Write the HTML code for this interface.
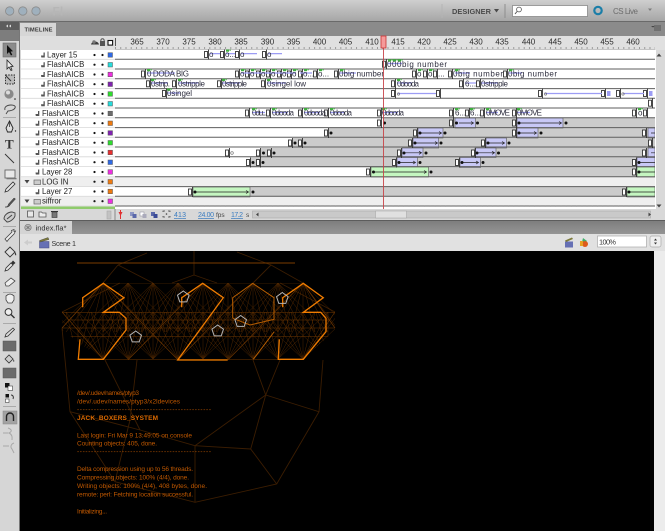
<!DOCTYPE html>
<html><head><meta charset="utf-8"><style>
html,body{margin:0;padding:0;background:#000;width:665px;height:531px;overflow:hidden}
svg{display:block;font-family:"Liberation Sans",sans-serif;filter:blur(.35px)}
.n{font-size:8px;fill:#2a2a2a;text-anchor:middle}
.l{font-size:7.8px;fill:#222}
.f{font-size:8px;fill:#2e2e3e}
.t{font-size:6.5px;fill:#c05800}
.d{fill:#111}
</style></head><body>
<svg width="665" height="531" viewBox="0 0 665 531" xmlns="http://www.w3.org/2000/svg">
<defs>
<linearGradient id="tb" x1="0" y1="0" x2="0" y2="1"><stop offset="0" stop-color="#cfcfcf"/><stop offset="1" stop-color="#a4a4a4"/></linearGradient>
<linearGradient id="bar" x1="0" y1="0" x2="0" y2="1"><stop offset="0" stop-color="#7c7c7c"/><stop offset="1" stop-color="#959595"/></linearGradient>
<clipPath id="mc"><path d="M62 312L103 283H303L335 312V330L303 360H103L62 330Z"/></clipPath>
<g id="k"><rect x="-1.500" y="-3" width="3" height="6" fill="#fff" stroke="#333" stroke-width=".9"/><line x1="2.500" y1="-5" x2="2.500" y2="5" stroke="#333" stroke-width=".9"/></g>
<g id="g"><rect x="0" y="-5" width="3" height="2.200" fill="#3fae3f"/><rect x="3.500" y="-5" width="1.200" height="1.400" fill="#3fae3f"/></g>
<path id="fan" d="M0 0L-50 49M0 0L-37 49M0 0L-25 49M0 0L-12 49M0 0L0 49M0 0L12 49M0 0L25 49M0 0L37 49M0 0L50 49"/>
<path id="fanu" d="M0 0L-50 -47M0 0L-37 -47M0 0L-25 -47M0 0L-12 -47M0 0L0 -47M0 0L12 -47M0 0L25 -47M0 0L37 -47M0 0L50 -47"/>
<path id="pent" d="M0 -6L5.800 -1.800L3.500 4.900L-3.500 4.900L-5.800 -1.800Z" fill="none" stroke="#b4b4b4" stroke-width="1"/>
</defs>

<!-- base -->
<rect width="665" height="531" fill="#d6d6d6"/>
<rect width="665" height="22" fill="url(#tb)"/>
<line x1="0" y1="21.500" x2="665" y2="21.500" stroke="#6a6a6a"/>
<g fill="#9fb0bd" stroke="#8a8a8a" stroke-width=".8"><circle cx="9.700" cy="11" r="4.200"/><circle cx="22.800" cy="11" r="4.200"/><circle cx="36" cy="11" r="4.200"/></g>
<text x="52.500" y="15.500" font-size="12" font-weight="bold" fill="#b6b6b6">Fl</text>
<line x1="442" y1="4" x2="442" y2="18" stroke="#b4b4b4"/>
<text x="452" y="14" font-size="7.400" font-weight="bold" fill="#4a4a4a" textLength="39">DESIGNER</text>
<path d="M494 9L499 9L496.500 12.500Z" fill="#4a4a4a"/>
<line x1="505" y1="4" x2="505" y2="18" stroke="#8e8e8e"/>
<rect x="512.500" y="5.500" width="75" height="11" fill="#fff" stroke="#8a8a8a" stroke-width=".8"/>
<circle cx="519" cy="9.500" r="2.400" fill="none" stroke="#555" stroke-width=".8"/><line x1="517" y1="11.500" x2="515" y2="14" stroke="#555"/>
<circle cx="598" cy="10.500" r="3.700" fill="none" stroke="#1b7ea8" stroke-width="2.200"/>
<text x="613" y="14" font-size="8" fill="#6c6c6c" textLength="25">CS Live</text>
<path d="M648 8.500L652 8.500L650 11Z" fill="#7d7d7d"/>

<rect y="22" width="665" height="14" fill="#8b8b8b"/>
<rect y="22" width="19" height="8" fill="#5d5d5d"/>
<rect y="30" width="19" height="11" fill="#7d7d7d"/>
<path d="M6 26L8 24.500V27.500ZM9 26L11 24.500V27.500Z" fill="#ddd"/>
<rect x="20" y="23" width="36" height="13" fill="#d6d6d6"/>
<text x="24.500" y="31.500" font-size="5.800" font-weight="bold" fill="#3a3a3a" textLength="28">TIMELINE</text>
<path d="M654 26h7M654 28h7M654 30h7" stroke="#444" stroke-width=".7"/><path d="M653 27.500L651 26H655Z" fill="#444"/>

<!-- timeline header -->
<rect x="20" y="36" width="645" height="14" fill="#dedede"/>
<rect x="115" y="36" width="550" height="14" fill="#e0e0e0"/>
<line x1="115" y1="48" x2="655" y2="48" stroke="#9a9a9a" stroke-width="2" stroke-dasharray="1 4.240"/>
<line x1="115" y1="49.500" x2="655" y2="49.500" stroke="#c4c4c4"/>
<path d="M91 44.500c1-4 7-4 8 0h-8z" fill="#3b3b3b"/><circle cx="94" cy="42" r="1.700" fill="#777"/>
<rect x="100" y="41" width="5" height="5" fill="#555"/><path d="M100.800 41c0-3 3.400-3 3.400 0" fill="none" stroke="#555"/>
<rect x="108" y="40.500" width="4.600" height="4.600" fill="#fff" stroke="#111" stroke-width="1.100"/>
<line x1="115.500" y1="38" x2="115.500" y2="46" stroke="#555"/>
<g>
<text class="n" x="137" y="44.500">365</text><text class="n" x="163" y="44.500">370</text><text class="n" x="189" y="44.500">375</text><text class="n" x="215" y="44.500">380</text><text class="n" x="241" y="44.500">385</text><text class="n" x="267.500" y="44.500">390</text><text class="n" x="293.500" y="44.500">395</text><text class="n" x="319.500" y="44.500">400</text><text class="n" x="345.500" y="44.500">405</text><text class="n" x="372" y="44.500">410</text><text class="n" x="398" y="44.500">415</text><text class="n" x="424" y="44.500">420</text><text class="n" x="450" y="44.500">425</text><text class="n" x="476" y="44.500">430</text><text class="n" x="502" y="44.500">435</text><text class="n" x="528.500" y="44.500">440</text><text class="n" x="555" y="44.500">445</text><text class="n" x="581" y="44.500">450</text><text class="n" x="607" y="44.500">455</text><text class="n" x="633" y="44.500">460</text>
</g>

<!-- layer column -->
<rect x="21" y="50" width="94" height="159" fill="#fff"/>
<rect x="21" y="177.300" width="94" height="9.700" fill="#efefef"/>
<rect x="21" y="196.800" width="94" height="9.700" fill="#efefef"/>
<rect x="21" y="206.500" width="94" height="3" fill="#8fcb6c"/>
<path d="M21 59.300H115M21 69H115M21 78.800H115M21 88.600H115M21 98.300H115M21 108H115M21 117.800H115M21 127.600H115M21 137.300H115M21 147H115M21 156.800H115M21 166.600H115M21 176.800H115M21 186.600H115M21 196.300H115M21 206H115" stroke="#d8d8d8" stroke-width=".8"/>

<!-- frames -->
<rect x="115" y="50" width="540" height="159" fill="#fff"/>
<g fill="#cbcbcb">
<rect x="383" y="118" width="272" height="10"/>
<rect x="329" y="128" width="326" height="10"/>
<rect x="293" y="138" width="362" height="10"/>
<rect x="261" y="148" width="394" height="9.500"/>
<rect x="250" y="157.500" width="405" height="10"/>
<rect x="428" y="167" width="227" height="10"/>
<rect x="250" y="187" width="405" height="10"/>
</g>
<rect x="115" y="177.300" width="540" height="9.700" fill="#efefef"/>
<rect x="115" y="196.800" width="540" height="9.700" fill="#efefef"/>
<g fill="#c8c8f6" stroke="#555" stroke-width=".6">
<rect x="455" y="118" width="20.500" height="10"/><rect x="517" y="118" width="46" height="10"/>
<rect x="418" y="128" width="25" height="10"/><rect x="517" y="128" width="21" height="10"/><rect x="648" y="128" width="7" height="10"/>
<rect x="413" y="138" width="25.700" height="10"/><rect x="486" y="138" width="20.500" height="10"/>
<rect x="402" y="148" width="21" height="9.500"/><rect x="475" y="148" width="21" height="9.500"/><rect x="648" y="148" width="7" height="9.500"/>
<rect x="397" y="157.500" width="20.500" height="10"/><rect x="460" y="157.500" width="20.500" height="10"/><rect x="637" y="157.500" width="18" height="10"/>
</g>
<g fill="#c4f6c0" stroke="#555" stroke-width=".6">
<rect x="371" y="167" width="57.500" height="10"/><rect x="637" y="167" width="18" height="10"/>
<rect x="193" y="187" width="57" height="10"/><rect x="627" y="187" width="28" height="10"/>
</g>
<path d="M115 59.300H655M115 69H655M115 78.800H655M115 88.600H655M115 98.300H655M115 108H655M115 117.800H655M115 127.600H655M115 137.300H655M115 147H655M115 156.800H655M115 166.600H655M115 176.800H655M115 186.600H655M115 196.300H655M115 206H655" stroke="#5e5e5e" stroke-width="1"/>
<path d="M115 206H655" stroke="#aaa" stroke-width="2" stroke-dasharray="1 4.240"/>

<g stroke="#222" stroke-width=".7" fill="none">
<path d="M459 123H473M520 123H561M421 133H441M520 133H536M416 143H437M489 143H504M405 152.800H421M478 152.800H494M400 162.500H415M463 162.500H478M651 133H655M651 152.800H655M640 162.500H655M640 172H655M374 172H426M196 192H248M630 192H655"/>
<path d="M471 121.500L473.500 123L471 124.500M559 121.500L561.500 123L559 124.500M439 131.500L441.500 133L439 134.500M534 131.500L536.500 133L534 134.500M435 141.500L437.500 143L435 144.500M502 141.500L504.500 143L502 144.500M419 151.300L421.500 152.800L419 154.300M492 151.300L494.500 152.800L492 154.300M413 161L415.500 162.500L413 164M476 161L478.500 162.500L476 164M424 170.500L426.500 172L424 173.500M246 190.500L248.500 192L246 193.500"/>
</g>
<g class="d">
<circle cx="384.500" cy="123" r="1.500"/><circle cx="456.500" cy="123" r="1.500"/><circle cx="477.500" cy="123" r="1.500"/><circle cx="519" cy="123" r="1.500"/><circle cx="566" cy="123" r="1.500"/>
<circle cx="331" cy="133" r="1.500"/><circle cx="420" cy="133" r="1.500"/><circle cx="519" cy="133" r="1.500"/><circle cx="541" cy="133" r="1.500"/><circle cx="445" cy="133" r="1.500"/>
<circle cx="295" cy="143" r="1.500"/><circle cx="305" cy="143" r="1.500"/><circle cx="415" cy="143" r="1.500"/><circle cx="441" cy="143" r="1.500"/><circle cx="488" cy="143" r="1.500"/><circle cx="509" cy="143" r="1.500"/>
<circle cx="263.500" cy="153" r="1.500"/><circle cx="274" cy="153" r="1.500"/><circle cx="404" cy="153" r="1.500"/><circle cx="426" cy="153" r="1.500"/><circle cx="477" cy="153" r="1.500"/><circle cx="498.500" cy="153" r="1.500"/>
<circle cx="253" cy="162.500" r="1.500"/><circle cx="263" cy="162.500" r="1.500"/><circle cx="399" cy="162.500" r="1.500"/><circle cx="420" cy="162.500" r="1.500"/><circle cx="462" cy="162.500" r="1.500"/><circle cx="483" cy="162.500" r="1.500"/><circle cx="639" cy="162.500" r="1.500"/>
<circle cx="373.500" cy="172" r="1.500"/><circle cx="431" cy="172" r="1.500"/><circle cx="639" cy="172" r="1.500"/>
<circle cx="195" cy="192" r="1.500"/><circle cx="253" cy="192" r="1.500"/><circle cx="629" cy="192" r="1.500"/>
</g>
<g>
<use href="#k" x="206" y="54.500"/><use href="#k" x="222" y="54.500"/><use href="#k" x="237" y="54.500"/><use href="#k" x="264" y="54.500"/>
<use href="#k" x="384" y="64.200"/>
<use href="#k" x="143" y="74"/><use href="#k" x="237" y="74"/><use href="#k" x="247" y="74"/><use href="#k" x="258" y="74"/><use href="#k" x="268" y="74"/><use href="#k" x="279" y="74"/><use href="#k" x="289" y="74"/><use href="#k" x="300" y="74"/><use href="#k" x="315" y="74"/><use href="#k" x="336" y="74"/><use href="#k" x="414" y="74"/><use href="#k" x="425" y="74"/><use href="#k" x="435" y="74"/><use href="#k" x="450" y="74"/><use href="#k" x="505" y="74"/>
<use href="#k" x="148" y="83.800"/><use href="#k" x="174" y="83.800"/><use href="#k" x="219" y="83.800"/><use href="#k" x="263" y="83.800"/><use href="#k" x="393" y="83.800"/><use href="#k" x="461" y="83.800"/><use href="#k" x="478" y="83.800"/>
<use href="#k" x="164" y="93.500"/><use href="#k" x="393" y="93.500"/><use href="#k" x="438" y="93.500"/><use href="#k" x="540" y="93.500"/><use href="#k" x="603" y="93.500"/><use href="#k" x="618" y="93.500"/><use href="#k" x="645" y="93.500"/>
<use href="#k" x="650" y="103.200"/>
<use href="#k" x="247" y="113"/><use href="#k" x="268" y="113"/><use href="#k" x="300" y="113"/><use href="#k" x="326" y="113"/><use href="#k" x="379" y="113"/><use href="#k" x="451" y="113"/><use href="#k" x="467" y="113"/><use href="#k" x="482" y="113"/><use href="#k" x="514" y="113"/><use href="#k" x="634" y="113"/><use href="#k" x="645" y="113"/>
<use href="#k" x="379" y="123"/><use href="#k" x="451" y="123"/><use href="#k" x="514" y="123"/>
<use href="#k" x="326" y="133"/><use href="#k" x="415" y="133"/><use href="#k" x="514" y="133"/><use href="#k" x="644" y="133"/>
<use href="#k" x="290" y="143"/><use href="#k" x="300" y="143"/><use href="#k" x="410" y="143"/><use href="#k" x="483" y="143"/><use href="#k" x="650" y="143"/>
<use href="#k" x="227" y="153"/><use href="#k" x="258" y="153"/><use href="#k" x="269" y="153"/><use href="#k" x="399" y="153"/><use href="#k" x="473" y="153"/><use href="#k" x="644" y="153"/>
<use href="#k" x="248" y="162.500"/><use href="#k" x="258" y="162.500"/><use href="#k" x="394" y="162.500"/><use href="#k" x="457" y="162.500"/><use href="#k" x="634" y="162.500"/>
<use href="#k" x="368" y="172"/><use href="#k" x="634" y="172"/>
<use href="#k" x="190" y="192"/><use href="#k" x="624" y="192"/>
</g>
<path d="M210 53.600H220M226 53.600H235M241 53.600H257M268 53.600H282M388 63.500H402M147 73H175M241 73H296M300 73H312M340 73H356M455 73H470M509 73H522M151 83H168M178 83H198M222 83H240M267 83H286M397 83H412M465 83H476M481 83H498M167 93H180M398 93.500H436M545 93.500H602M623 93.500H644M252 112.500H265M272 112.500H288M304 112.500H320M330 112.500H345M382 112.500H398M486 112.500H498M517 112.500H530" stroke="#9c9cf4" stroke-width="1.200"/>
<g class="f">
<text x="209" y="57">o</text><text x="225" y="57">o...</text><text x="240" y="57">o</text><text x="267" y="57">o</text>
<text x="387" y="67" textLength="60">000big number</text>
<text x="147" y="76.600" textLength="42">0 DODA BIG</text>
<text x="240" y="76.600">o</text><text x="250" y="76.600">o</text><text x="261" y="76.600">o</text><text x="271" y="76.600">o</text><text x="282" y="76.600">o</text><text x="292" y="76.600">o</text><text x="303" y="76.600">o...</text><text x="318" y="76.600">o...</text>
<text x="339" y="76.600" textLength="45">0big number</text>
<text x="417" y="76.600">o</text><text x="428" y="76.600">o</text><text x="438" y="76.600">...</text>
<text x="453" y="76.600" textLength="50">0big number</text><text x="508" y="76.600" textLength="49">0big number</text>
<text x="151" y="86.400" textLength="19">0strip.</text><text x="178" y="86.400" textLength="27">0stripple</text><text x="222" y="86.400" textLength="25">0stripple</text>
<text x="267" y="86.400" textLength="39">0singel low</text><text x="397" y="86.400" textLength="22">0dooda</text>
<text x="465" y="86.400">6...</text><text x="481" y="86.400" textLength="27">0stripple</text>
<text x="167" y="96.200" textLength="25">0singel</text>
<text x="252" y="115.600" textLength="15">0du...</text><text x="272" y="115.600" textLength="22">0dooda</text><text x="304" y="115.600" textLength="22">0dooda</text><text x="330" y="115.600" textLength="22">0dooda</text><text x="382" y="115.600" textLength="22">0dooda</text>
<text x="455" y="115.600">6...</text><text x="470" y="115.600">6...</text><text x="486" y="115.600" textLength="24">0MOVE</text><text x="517" y="115.600" textLength="25">0MOVE</text><text x="638" y="115.600">o</text>
</g>
<g fill="none" stroke="#666" stroke-width=".6"><circle cx="398.500" cy="94" r="1.200"/><circle cx="545.500" cy="94" r="1.200"/><circle cx="623" cy="94" r="1.200"/><circle cx="232" cy="153" r="1.300"/></g>
<rect x="607" y="91" width="3.500" height="5" fill="#9c9cf4"/><rect x="649" y="91" width="3.500" height="5" fill="#9c9cf4"/>
<g>
<use href="#g" x="147" y="74"/><use href="#g" x="151" y="83.800"/><use href="#g" x="178" y="83.800"/><use href="#g" x="222" y="83.800"/><use href="#g" x="267" y="83.800"/><use href="#g" x="397" y="83.800"/><use href="#g" x="167" y="93.500"/><use href="#g" x="226" y="54.500"/>
<use href="#g" x="388" y="64.200"/><use href="#g" x="393" y="64.200"/><use href="#g" x="398" y="64.200"/>
<use href="#g" x="241" y="74"/><use href="#g" x="251" y="74"/><use href="#g" x="262" y="74"/><use href="#g" x="272" y="74"/><use href="#g" x="283" y="74"/><use href="#g" x="293" y="74"/><use href="#g" x="304" y="74"/><use href="#g" x="319" y="74"/><use href="#g" x="340" y="74"/><use href="#g" x="418" y="74"/><use href="#g" x="429" y="74"/><use href="#g" x="455" y="74"/><use href="#g" x="509" y="74"/>
<use href="#g" x="252" y="113"/><use href="#g" x="272" y="113"/><use href="#g" x="304" y="113"/><use href="#g" x="330" y="113"/><use href="#g" x="382" y="113"/><use href="#g" x="455" y="113"/><use href="#g" x="470" y="113"/><use href="#g" x="486" y="113"/><use href="#g" x="517" y="113"/><use href="#g" x="638" y="113"/>
</g>

<!-- layer names -->
<g class="l">
<text x="47" y="57.300">Layer 15</text><text x="47" y="67">FlashAICB</text><text x="47" y="76.800">FlashAICB</text><text x="47" y="86.500">FlashAICB</text><text x="47" y="96.300">FlashAICB</text><text x="47" y="106">FlashAICB</text>
<text x="42" y="115.800">FlashAICB</text><text x="42" y="125.500">FlashAICB</text><text x="42" y="135.300">FlashAICB</text><text x="42" y="145">FlashAICB</text><text x="42" y="154.800">FlashAICB</text><text x="42" y="164.500">FlashAICB</text><text x="42" y="174.500">Layer 28</text><text x="42" y="184.300">LOG IN</text><text x="42" y="194">Layer 27</text><text x="42" y="203.700">siffror</text>
</g>
<path d="M41 55.500h2.500v-3h1.300v5h-3.500zM41 65.200h2.500v-3h1.300v5h-3.500zM41 75h2.500v-3h1.300v5h-3.500zM41 84.700h2.500v-3h1.300v5h-3.500zM41 94.500h2.500v-3h1.300v5h-3.500zM41 104.200h2.500v-3h1.300v5h-3.500zM35.500 114h2.500v-3h1.300v5h-3.500zM35.500 123.800h2.500v-3h1.300v5h-3.500zM35.500 133.500h2.500v-3h1.300v5h-3.500zM35.500 143.200h2.500v-3h1.300v5h-3.500zM35.500 153h2.500v-3h1.300v5h-3.500zM35.500 162.800h2.500v-3h1.300v5h-3.500zM35.500 172.500h2.500v-3h1.300v5h-3.500zM35.500 192.200h2.500v-3h1.300v5h-3.500z" fill="#555"/>
<path d="M24.500 180h5l-2.500 3.500zM24.500 199.500h5l-2.500 3.500z" fill="#444"/>
<g fill="#ccc" stroke="#666" stroke-width=".7"><rect x="34" y="180" width="6.500" height="4.500"/><rect x="34" y="199.500" width="6.500" height="4.500"/></g>
<g fill="#111">
<circle cx="94.500" cy="55" r="1.100"/><circle cx="102.500" cy="55" r="1.100"/><circle cx="94.500" cy="64.700" r="1.100"/><circle cx="102.500" cy="64.700" r="1.100"/><circle cx="94.500" cy="74.500" r="1.100"/><circle cx="102.500" cy="74.500" r="1.100"/><circle cx="94.500" cy="84.200" r="1.100"/><circle cx="102.500" cy="84.200" r="1.100"/><circle cx="94.500" cy="94" r="1.100"/><circle cx="102.500" cy="94" r="1.100"/><circle cx="94.500" cy="103.700" r="1.100"/><circle cx="102.500" cy="103.700" r="1.100"/><circle cx="94.500" cy="113.500" r="1.100"/><circle cx="102.500" cy="113.500" r="1.100"/><circle cx="94.500" cy="123.200" r="1.100"/><circle cx="102.500" cy="123.200" r="1.100"/><circle cx="94.500" cy="133" r="1.100"/><circle cx="102.500" cy="133" r="1.100"/><circle cx="94.500" cy="142.700" r="1.100"/><circle cx="102.500" cy="142.700" r="1.100"/><circle cx="94.500" cy="152.500" r="1.100"/><circle cx="102.500" cy="152.500" r="1.100"/><circle cx="94.500" cy="162.200" r="1.100"/><circle cx="102.500" cy="162.200" r="1.100"/><circle cx="94.500" cy="172" r="1.100"/><circle cx="102.500" cy="172" r="1.100"/><circle cx="94.500" cy="181.700" r="1.100"/><circle cx="102.500" cy="181.700" r="1.100"/><circle cx="94.500" cy="191.500" r="1.100"/><circle cx="102.500" cy="191.500" r="1.100"/><circle cx="94.500" cy="201.200" r="1.100"/><circle cx="102.500" cy="201.200" r="1.100"/>
</g>
<g stroke="#555" stroke-width=".5">
<rect x="108" y="52.700" width="4.500" height="4.500" fill="#2e6ae6"/><rect x="108" y="62.500" width="4.500" height="4.500" fill="#26dcdc"/><rect x="108" y="72.200" width="4.500" height="4.500" fill="#ee2ee0"/><rect x="108" y="82" width="4.500" height="4.500" fill="#8022b0"/><rect x="108" y="91.700" width="4.500" height="4.500" fill="#2edc2e"/><rect x="108" y="101.500" width="4.500" height="4.500" fill="#26dcdc"/><rect x="108" y="111.200" width="4.500" height="4.500" fill="#6c6c6c"/><rect x="108" y="121" width="4.500" height="4.500" fill="#ee7a10"/><rect x="108" y="130.700" width="4.500" height="4.500" fill="#8022b0"/><rect x="108" y="140.500" width="4.500" height="4.500" fill="#2edc2e"/><rect x="108" y="150.200" width="4.500" height="4.500" fill="#e82e2e"/><rect x="108" y="160" width="4.500" height="4.500" fill="#2e6ae6"/><rect x="108" y="169.700" width="4.500" height="4.500" fill="#ee2ee0"/><rect x="108" y="179.500" width="4.500" height="4.500" fill="#ee7a10"/><rect x="108" y="189.200" width="4.500" height="4.500" fill="#ee7a10"/><rect x="108" y="199" width="4.500" height="4.500" fill="#ee2ee0"/>
</g>

<!-- playhead -->
<line x1="383.500" y1="48" x2="383.500" y2="209" stroke="#c8454a" stroke-width=".9"/>
<rect x="381" y="36" width="5" height="12" fill="#f59a9a" stroke="#c83030" stroke-width=".8"/>

<!-- v scrollbar -->
<rect x="655" y="50" width="10" height="159" fill="#d9d9d9"/>
<line x1="655.500" y1="50" x2="655.500" y2="209" stroke="#fff" stroke-width="1"/>
<path d="M659 53.500L661.500 56.500H656.500ZM659 207.500L661.500 204.500H656.500Z" fill="#444"/>

<!-- status bar -->
<rect x="20" y="209" width="645" height="11" fill="#d8d8d8"/>
<line x1="115" y1="209" x2="115" y2="220" stroke="#888"/>
<rect x="27.500" y="211" width="6" height="6" fill="#e8e8e8" stroke="#555" stroke-width=".8"/>
<path d="M39 212h2.500l1 1h3.500v4h-7z" fill="#ececec" stroke="#555" stroke-width=".8"/>
<rect x="52" y="212" width="5" height="5.500" fill="#777" stroke="#444" stroke-width=".7"/><line x1="51" y1="211.500" x2="58" y2="211.500" stroke="#333"/>
<rect x="107" y="211" width="4" height="8" fill="#c2c2c2" stroke="#aaa" stroke-width=".6"/>
<line x1="120.500" y1="210" x2="120.500" y2="219" stroke="#e03030" stroke-width="1"/><path d="M118.500 212L122.500 212L120.500 216Z" fill="#e03030"/>
<rect x="130" y="212" width="4" height="4" fill="#8c96c4"/><rect x="132.500" y="214" width="4" height="4" fill="#5a68aa"/>
<rect x="140" y="212" width="4" height="4" fill="#fff" stroke="#889" stroke-width=".5"/><rect x="142.500" y="214" width="4" height="4" fill="#aab"/>
<rect x="151" y="212" width="4" height="4" fill="#5a68aa"/><rect x="153.500" y="214" width="4" height="4" fill="#3a4a96"/>
<path d="M163 212v-1h2M168 211h2v1M170 216v1h-2M165 217h-2v-1" fill="none" stroke="#444" stroke-width=".8"/><circle cx="166.500" cy="214" r=".8" fill="#444"/>
<g font-size="7" fill="#3a7cc0" text-decoration="underline"><text x="174" y="217" textLength="12">413</text><text x="198" y="217" textLength="16">24.00</text><text x="231" y="217" textLength="12">17.2</text></g>
<text x="216" y="217" font-size="6.500" fill="#444">fps</text><text x="246" y="217" font-size="6.500" fill="#444">s</text>
<rect x="252.500" y="211" width="398" height="7" fill="#c9c9c9" stroke="#a8a8a8" stroke-width=".6"/>
<rect x="375.500" y="211" width="31" height="7" fill="#e0e0e0" stroke="#a8a8a8" stroke-width=".6"/>
<path d="M256 214.500L258.500 212.500V216.500ZM651 214.500L648.500 212.500V216.500Z" fill="#444"/>

<!-- doc tab bar -->
<rect x="19" y="220" width="646" height="14" fill="url(#bar)"/>
<line x1="19" y1="220.500" x2="665" y2="220.500" stroke="#5c5c5c"/>
<rect x="20" y="221" width="52" height="13" fill="#d4d4d4"/>
<circle cx="28" cy="227.500" r="3.200" fill="#bbb" stroke="#777" stroke-width=".7"/><path d="M26.500 226L29.500 229M29.500 226L26.500 229" stroke="#666" stroke-width=".7"/>
<text x="35.500" y="230.500" font-size="7.400" fill="#333" textLength="31">index.fla*</text>

<!-- edit bar -->
<rect x="19" y="234" width="646" height="17" fill="#e1e1e1"/>
<path d="M24 242.500L28 239.500V241.500H32V243.500H28V245.500Z" fill="#cdcdcd"/>
<rect x="39.500" y="241.500" width="9.500" height="6.500" fill="#6670b4" stroke="#444a80" stroke-width=".5"/>
<path d="M39.500 240.500L48 237.500L49 239.500L40 242Z" fill="#7d7a3a" stroke="#444" stroke-width=".4"/>
<text x="51.500" y="246" font-size="7.200" fill="#333" textLength="24.500">Scene 1</text>
<rect x="565" y="241.500" width="8" height="6" fill="#6670b4"/><path d="M565 240.500L572 237.500L573 239L566 242Z" fill="#7d7a3a"/>
<path d="M583 238l4 3-6 5z" fill="#40b06a"/><circle cx="585" cy="244" r="3" fill="#dd5a1c"/><rect x="580" y="241" width="3" height="5" fill="#e8a020"/>
<rect x="597.500" y="236" width="49" height="11" fill="#fff" stroke="#aaa" stroke-width=".7"/>
<text x="599" y="244.500" font-size="7.400" fill="#333" textLength="17">100%</text>
<rect x="650" y="236" width="11" height="11" rx="2" fill="#efefef" stroke="#aaa" stroke-width=".7"/>
<path d="M655.500 238.500L657 240.500H654ZM655.500 244.500L657 242.500H654Z" fill="#333"/>

<!-- stage -->
<rect x="19" y="251" width="635" height="280" fill="#000"/>
<rect x="654" y="251" width="11" height="280" fill="#ececec"/>

<g fill="none" stroke="#3b1d02" stroke-width=".9">
<path d="M265.700 395L319 411.700L276.700 484L195 502.300L115 481.700L70 411.700L62 328"/>
<path d="M195 445.700L265.700 395L250.700 449L276.700 484M195 445.700L250.700 449M195 445.700V502.300"/>
<path d="M70 411.700L140 430L195 445.700M115 481.700L130 420L137 360M105 360L140 430"/>
<path d="M253 360L265.700 395L280 360M323 360L319 411.700M118 265L103 283M118 265L153 283M118 265L147 253M271 265L253 283M271 265L303 283M271 265L237 252"/>
<path d="M194 251V275M194 275L172 283M194 275L217 283M62 328L103 283M62 312L120 283M335 328L303 283M335 312L280 283"/>
</g>
<g clip-path="url(#mc)">
<g fill="none" stroke="#7a3c00" stroke-width=".45" opacity=".7">
<use href="#fan" x="103" y="283"/><use href="#fan" x="153" y="283"/><use href="#fan" x="203" y="283"/><use href="#fan" x="253" y="283"/><use href="#fan" x="303" y="283"/>
<use href="#fan" x="128" y="283"/><use href="#fan" x="178" y="283"/><use href="#fan" x="228" y="283"/><use href="#fan" x="278" y="283"/>
<use href="#fanu" x="78" y="359"/><use href="#fanu" x="128" y="359"/><use href="#fanu" x="178" y="359"/><use href="#fanu" x="228" y="359"/><use href="#fanu" x="278" y="359"/><use href="#fanu" x="103" y="359"/><use href="#fanu" x="153" y="359"/><use href="#fanu" x="203" y="359"/><use href="#fanu" x="253" y="359"/><use href="#fanu" x="303" y="359"/><use href="#fanu" x="328" y="359"/>
</g>
<g fill="none" stroke="#6e3600" stroke-width=".6">
<path d="M103 283H303M62 312.500H335M70 320H330M62 328H335M70 336.500H330M103 359.500H328"/>
<path d="M62 312L103 359M62 328L103 283M335 312L303 359M335 328L303 283M103 283L178 360M203 283L128 360M253 283L178 360M303 283L228 360"/>
</g>
</g>
<line x1="77" y1="263" x2="295" y2="263" stroke="#7a3c00" stroke-width="1"/>
<g fill="none" stroke="#f07c00" stroke-width="1.300">
<path d="M82.700 307.300V297.700L103.300 283.300L124 297.700L103.300 312.300H119.300L126 318.300V330L103.300 359.300H78.300L80 339.300"/>
<path d="M181.700 307.300V297.700L202.700 283.300L223.300 297.700L177.700 360H227.700"/>
<path d="M282.700 307.300V297.700L303.300 283.300L323.300 297.700L303.300 312.300H320.700L326 318.300V331.700L303.300 359.300H278.300L279.300 339.300"/>
</g>
<path d="M232.700 318.300V297.700L252.700 283.300L274 297.700V319.300L250 325L232.700 318.300M274 332L253.300 359.300" fill="none" stroke="#b85e00" stroke-width="1"/>
<use href="#pent" x="183.300" y="297"/><use href="#pent" x="135.700" y="337"/><use href="#pent" x="217.700" y="331"/><use href="#pent" x="240.700" y="321.500"/><use href="#pent" x="282.300" y="298.500"/>
<g class="t">
<text x="77" y="395" textLength="62">/dev/.udev/names/ptyp3</text>
<text x="77" y="403.500" textLength="103">/dev/.udev/names/ptyp3/x2ldevices</text>
<text x="77" y="411.500" textLength="134">------------------------------------------------</text>
<text x="77" y="420" textLength="81" font-weight="bold" style="fill:#dd6a00">JACK_BOXERS_SYSTEM</text>
<text x="77" y="437.500" textLength="115">Last login: Fri Mar 9 13:49:05 on console</text>
<text x="77" y="445.500" textLength="80">Counting objects: 405, done.</text>
<text x="77" y="453.500" textLength="134">------------------------------------------------</text>
<text x="77" y="471" textLength="116">Delta compression using up to 56 threads.</text>
<text x="77" y="479.500" textLength="112">Compressing objects: 100% (4/4), done.</text>
<text x="77" y="488" textLength="130">Writing objects: 100% (4/4), 408 bytes, done.</text>
<text x="77" y="496.500" textLength="116">remote: perl: Fetching location successful.</text>
<text x="77" y="513.500" textLength="30">Initializing...</text>
</g>

<!-- tool panel -->
<rect y="41" width="19" height="490" fill="#d6d6d6"/>
<line x1="19.500" y1="22" x2="19.500" y2="531" stroke="#777"/>
<rect x="3" y="43" width="13" height="14" fill="#8c8c8c" stroke="#6a6a6a" stroke-width=".6"/>
<path d="M7 45L7 54L9 52L11 55.500L12.300 54.800L10.600 51.600L13 51.300Z" fill="#111"/>
<path d="M7 60L7 69L9 67L11 70.500L12 70L10.600 66.600L13 66.300Z" fill="#eee" stroke="#222" stroke-width=".8"/>
<rect x="5.500" y="75" width="9" height="9" fill="#bbb" stroke="#222" stroke-width=".9" stroke-dasharray="1.500 1.200"/><path d="M6 76l5 5" stroke="#333"/>
<circle cx="9" cy="94" r="4.600" fill="#8a8a8a"/><circle cx="8" cy="92.500" r="2" fill="#dcdcdc"/><circle cx="15" cy="99" r=".8" fill="#222"/>
<path d="M5 110c-1-3 2-5 6-5 3 0 5 1 4 3-1 2-5 3-7 3l-2 3" fill="none" stroke="#444" stroke-width=".9"/>
<line x1="3" y1="117.500" x2="16" y2="117.500" stroke="#aaa"/>
<path d="M9.500 121L13 128L11.500 132H7.500L6 128Z" fill="#ddd" stroke="#222" stroke-width=".9"/><line x1="9.500" y1="122" x2="9.500" y2="127" stroke="#222" stroke-width=".7"/><circle cx="15.500" cy="131" r=".7" fill="#222"/>
<text x="5" y="148.500" font-family="Liberation Serif,serif" font-size="13" font-weight="bold" fill="#333">T</text>
<line x1="5" y1="154" x2="14" y2="163" stroke="#333" stroke-width=".9"/>
<rect x="5" y="170" width="10" height="8" fill="#e8e8e8" stroke="#666" stroke-width=".9"/><rect x="6.500" y="178" width="10" height="1.300" fill="#777"/>
<path d="M5 192L6 189L13 182L15 184L8 191Z" fill="#e6e6e6" stroke="#333" stroke-width=".8"/>
<path d="M5 207c2 0 3-1 3.500-3L14 198L15.500 199L10 205c-.5 1.500-2.500 2.500-5 2z" fill="#555" stroke="#333" stroke-width=".5"/>
<path d="M4 219c0-4 4-7 8-7l3 1 0 3c-1 3-5 6-8 6z" fill="#ccc" stroke="#444" stroke-width=".9"/><path d="M7 219l5-4" stroke="#444"/>
<line x1="3" y1="226.500" x2="16" y2="226.500" stroke="#aaa"/>
<path d="M5 239L7 237L12 232L11.500 230.500L14 229.500L14 231.500L15.500 231L14 234L8.500 239.500L7 241.500Z" fill="#eee" stroke="#444" stroke-width=".8"/>
<path d="M5 252L10 247L15 252L10 257Z" fill="#ddd" stroke="#333" stroke-width=".9"/><path d="M15 252c1 1 1.500 2.500 1 3.500-1 0-1.500-2-1-3.500z" fill="#333"/>
<path d="M5 271L6 268L11 263L13 265L8 270Z" fill="#e6e6e6" stroke="#333" stroke-width=".8"/><path d="M11 263L13 260.500L15.500 263L13 265Z" fill="#333"/>
<path d="M5 283L11 278L15 281L9 286H6Z" fill="#eee" stroke="#444" stroke-width=".8"/>
<line x1="3" y1="292.500" x2="16" y2="292.500" stroke="#aaa"/>
<path d="M6 300V296L8 294.500L10 294L12 294.500L14 296V300L12 303H8Z" fill="#eee" stroke="#444" stroke-width=".8"/>
<circle cx="8.500" cy="312" r="3.400" fill="#eee" stroke="#333" stroke-width="1"/><line x1="11" y1="314.500" x2="14.500" y2="318" stroke="#333" stroke-width="1.400"/>
<line x1="3" y1="323.500" x2="16" y2="323.500" stroke="#aaa"/>
<path d="M5 337L6 334L13 328L14.500 329.500L8 336Z" fill="#ddd" stroke="#333" stroke-width=".8"/>
<rect x="3" y="341" width="13" height="10" fill="#6b6b6b" stroke="#555" stroke-width=".5"/>
<path d="M5 359L9 355L13 359L9 363Z" fill="#ccc" stroke="#333" stroke-width=".8"/><path d="M13 359l1.500 2-1 1z" fill="#333"/>
<rect x="3" y="368" width="13" height="10" fill="#6b6b6b" stroke="#555" stroke-width=".5"/>
<rect x="5" y="383" width="4.500" height="4.500" fill="#111"/><rect x="8" y="386" width="4.500" height="4.500" fill="#fff" stroke="#222" stroke-width=".5"/>
<rect x="5.500" y="394" width="3.500" height="3.500" fill="#111"/><rect x="5.500" y="399" width="3.500" height="3.500" fill="#fff" stroke="#222" stroke-width=".5"/><path d="M11 395c2 0 3 2 2 4" fill="none" stroke="#333"/>
<line x1="3" y1="406.500" x2="16" y2="406.500" stroke="#aaa"/>
<rect x="3" y="411" width="14" height="13" fill="#a2a2a2" stroke="#888" stroke-width=".5"/>
<path d="M6.500 421V416.500a3.500 3.500 0 0 1 7 0V421" fill="none" stroke="#222" stroke-width="1.400"/>
<path d="M3 433H8M8 428c3 1 5 3 1 5c4 2 3 5 3 7" fill="none" stroke="#a8a8a8" stroke-width="1"/>
<path d="M3 446H9M14 443c-3 1-4 4-2 6l2 4" fill="none" stroke="#a8a8a8" stroke-width="1"/>
</svg>
</body></html>
